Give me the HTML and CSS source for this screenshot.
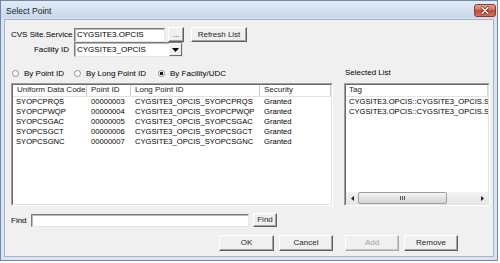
FILE: index.html
```html
<!DOCTYPE html>
<html>
<head>
<meta charset="utf-8">
<link rel="stylesheet" href="styles.css">
</head>
<body>
<div class="window">
  <div class="titlebar">
    <span class="title">Select Point</span>
    <div class="close">
      <svg width="22" height="13" viewBox="0 0 22 13">
        <defs>
          <linearGradient id="cg" x1="0" y1="0" x2="0" y2="1">
            <stop offset="0" stop-color="#e8a89a"/>
            <stop offset="0.45" stop-color="#d3705c"/>
            <stop offset="0.5" stop-color="#c34a33"/>
            <stop offset="1" stop-color="#d4775f"/>
          </linearGradient>
        </defs>
        <rect x="0.5" y="0.5" width="21" height="12" rx="2.5" fill="url(#cg)" stroke="#8a3a2c"/>
        <path d="M8 3.5 L14 9.5 M14 3.5 L8 9.5" stroke="#5a2218" stroke-width="2.6" stroke-linecap="round"/>
        <path d="M8 3.5 L14 9.5 M14 3.5 L8 9.5" stroke="#ffffff" stroke-width="1.5" stroke-linecap="round"/>
      </svg>
    </div>
  </div>
  <div class="client">
    <div class="form-row row1">
      <span class="lbl">CVS Site.Service</span>
      <div class="edit site">CYGSITE3.OPCIS</div>
      <button class="btn dots">...</button>
      <button class="btn refresh">Refresh List</button>
    </div>
    <div class="form-row row2">
      <span class="lbl">Facility ID</span>
      <div class="combo">
        <span class="combo-text">CYGSITE3_OPCIS</span>
        <span class="combo-btn">
          <svg width="7" height="4" viewBox="0 0 7 4"><path d="M0 0 H7 L3.5 4 Z" fill="#000"/></svg>
        </span>
      </div>
    </div>
    <div class="lists">
      <div class="radios">
        <label class="opt"><span class="radio"></span>By Point ID</label>
        <label class="opt"><span class="radio"></span>By Long Point ID</label>
        <label class="opt"><span class="radio checked"></span>By Facility/UDC</label>
      </div>
      <div class="sel-label">Selected List</div>
      <div class="listview">
        <div class="lv-inner">
          <div class="lv-head cols4">
            <div class="hc">Uniform Data Code</div>
            <div class="hc">Point ID</div>
            <div class="hc">Long Point ID</div>
            <div class="hc">Security</div>
          </div>
          <div class="lv-body">
            <div class="lv-row cols4"><div class="c">SYOPCPRQS</div><div class="c">00000003</div><div class="c">CYGSITE3_OPCIS_SYOPCPRQS</div><div class="c">Granted</div></div>
            <div class="lv-row cols4"><div class="c">SYOPCPWQP</div><div class="c">00000004</div><div class="c">CYGSITE3_OPCIS_SYOPCPWQP</div><div class="c">Granted</div></div>
            <div class="lv-row cols4"><div class="c">SYOPCSGAC</div><div class="c">00000005</div><div class="c">CYGSITE3_OPCIS_SYOPCSGAC</div><div class="c">Granted</div></div>
            <div class="lv-row cols4"><div class="c">SYOPCSGCT</div><div class="c">00000006</div><div class="c">CYGSITE3_OPCIS_SYOPCSGCT</div><div class="c">Granted</div></div>
            <div class="lv-row cols4"><div class="c">SYOPCSGNC</div><div class="c">00000007</div><div class="c">CYGSITE3_OPCIS_SYOPCSGNC</div><div class="c">Granted</div></div>
          </div>
        </div>
      </div>
      <div class="listview">
        <div class="lv-inner">
          <div class="lv-head cols1">
            <div class="hc tag">Tag</div>
          </div>
          <div class="lv-body">
            <div class="lv-row cols1"><div class="c sel">CYGSITE3.OPCIS::CYGSITE3_OPCIS.SYOPCPRQS</div></div>
            <div class="lv-row cols1"><div class="c sel">CYGSITE3.OPCIS::CYGSITE3_OPCIS.SYOPCPWQP</div></div>
          </div>
          <div class="hscroll">
            <div class="sb-arrow">
              <svg width="3" height="5" viewBox="0 0 3 5"><path d="M3 0 V5 L0 2.5 Z" fill="#222"/></svg>
            </div>
            <div class="sb-thumb">
              <svg width="5" height="4" viewBox="0 0 5 4"><path d="M0.5 0 V4 M2.5 0 V4 M4.5 0 V4" stroke="#555" stroke-width="1"/></svg>
            </div>
            <div class="sb-track"></div>
            <div class="sb-arrow">
              <svg width="3" height="5" viewBox="0 0 3 5"><path d="M0 0 V5 L3 2.5 Z" fill="#222"/></svg>
            </div>
          </div>
        </div>
      </div>
    </div>
    <div class="find-row">
      <span class="find-lbl">Find</span>
      <div class="edit find-edit"></div>
      <button class="btn find-btn">Find</button>
    </div>
    <div class="btn-row">
      <button class="btn act ok">OK</button>
      <button class="btn act">Cancel</button>
      <button class="btn act add" disabled>Add</button>
      <button class="btn act">Remove</button>
    </div>
  </div>
</div>
</body>
</html>
```

FILE: styles.css
```css
html, body {
  margin: 0;
  padding: 0;
  background: #ffffff;
}

body {
  font-family: "Liberation Sans", Arial, sans-serif;
  font-size: 8px;
  color: #000;
}

.window {
  width: 498px;
  height: 261px;
  box-sizing: border-box;
  border: 1px solid #7189a8;
  background: #d9e4f1;
  display: flex;
  flex-direction: column;
}

.titlebar {
  height: 17px;
  flex: none;
  display: flex;
  align-items: flex-start;
  background: linear-gradient(#e2ebf7, #c8d8ed);
}

.title {
  font-size: 8.5px;
  line-height: 10px;
  margin: 5px 0 0 5px;
  color: #1b1b1b;
}

.close {
  margin: 3px 1px 0 auto;
  width: 22px;
  height: 13px;
}

.close svg {
  display: block;
}

.client {
  flex: 1;
  margin: 1px 3px 3px 3px;
  border: 1px solid #a6b4c6;
  background: #f0f0f0;
  padding: 7px 2px 0 6px;
  display: flex;
  flex-direction: column;
}

.form-row {
  display: flex;
  align-items: center;
}

.row1 {
  height: 15px;
}

.row2 {
  height: 15px;
}

.lbl {
  width: 58px;
  margin-right: 5px;
  text-align: right;
  white-space: nowrap;
}

.edit {
  box-sizing: border-box;
  background: #fff;
  border: 1px solid;
  border-color: #7a7a7a #e6e6e6 #e6e6e6 #7a7a7a;
  box-shadow: inset 1px 1px 0 #b9b9b9;
  line-height: 12px;
  padding-left: 2px;
  white-space: nowrap;
  overflow: hidden;
}

.site {
  width: 91px;
  height: 14px;
}

.btn {
  box-sizing: border-box;
  font-family: "Liberation Sans", Arial, sans-serif;
  font-size: 8px;
  font-weight: 400;
  color: #262626;
  -webkit-font-smoothing: antialiased;
  background: #f0f0f0;
  border: 1px solid;
  border-color: #ffffff #5f5f5f #5f5f5f #ffffff;
  box-shadow: inset -1px -1px 0 #a3a3a3;
  padding: 0;
  margin: 0;
  line-height: 10px;
  text-align: center;
  white-space: nowrap;
}

.dots {
  width: 16px;
  height: 15px;
  margin-left: 3px;
  line-height: 8px;
}

.refresh {
  width: 56px;
  height: 15px;
  margin-left: 7px;
}

.combo {
  width: 109px;
  height: 15px;
  box-sizing: border-box;
  background: #fff;
  border: 1px solid;
  border-color: #7a7a7a #e6e6e6 #e6e6e6 #7a7a7a;
  box-shadow: inset 1px 1px 0 #b9b9b9;
  display: flex;
  align-items: stretch;
}

.combo-text {
  flex: 1;
  padding-left: 2px;
  line-height: 13px;
  white-space: nowrap;
}

.combo-btn {
  width: 13px;
  box-sizing: border-box;
  background: #f0f0f0;
  border: 1px solid;
  border-color: #f8f8f8 #6a6a6a #6a6a6a #f8f8f8;
  display: flex;
  align-items: center;
  justify-content: center;
}

.combo-btn svg {
  display: block;
}

.lists {
  margin-top: 10px;
  display: grid;
  grid-template-columns: 322px 146px;
  grid-template-rows: 12px 123px;
  column-gap: 11px;
  row-gap: 4px;
}

.radios {
  display: grid;
  grid-template-columns: 62px 84px auto;
  align-items: center;
  padding-left: 1px;
}

.opt {
  display: flex;
  align-items: center;
  white-space: nowrap;
}

.radio {
  width: 7px;
  height: 7px;
  box-sizing: border-box;
  border-radius: 50%;
  border: 1px solid #8d8d8d;
  background: #ffffff;
  margin-right: 5px;
  flex: none;
}

.radio.checked {
  background: radial-gradient(circle, #1a1a1a 0 1.6px, #ffffff 2px);
}

.sel-label {
  padding-left: 1px;
  line-height: 12px;
  white-space: nowrap;
}

.listview {
  box-sizing: border-box;
  border: 1px solid;
  border-color: #a0a0a0 #ffffff #ffffff #a0a0a0;
}

.lv-inner {
  box-sizing: border-box;
  height: 100%;
  border: 1px solid;
  border-color: #696969 #e3e3e3 #e3e3e3 #696969;
  background: #ffffff;
  display: flex;
  flex-direction: column;
  overflow: hidden;
}

.lv-head {
  height: 12px;
  box-sizing: border-box;
  border-bottom: 1px solid #e2e2e2;
  display: grid;
  flex: none;
}

.cols4 {
  grid-template-columns: 74px 44px 129px 71px;
}

.cols1 {
  grid-template-columns: 142px;
}

.hc {
  box-sizing: border-box;
  padding-left: 4px;
  border-right: 1px solid #cdcdcd;
  line-height: 10px;
  white-space: nowrap;
  overflow: hidden;
  color: #1a1a1a;
}

.hc.tag {
  padding-left: 3px;
  border-right-color: #d8d8d8;
}

.lv-body {
  flex: 1;
}

.lv-row {
  display: grid;
  height: 10px;
}

.c {
  padding-left: 4px;
  padding-right: 3px;
  font-size: 7.6px;
  line-height: 10px;
  white-space: nowrap;
  overflow: hidden;
}

.lv-row .c:first-child {
  padding-left: 3px;
}

.c.sel {
  padding-left: 1px;
  padding-right: 0;
}

.hscroll {
  height: 12px;
  flex: none;
  display: flex;
  background: linear-gradient(#f2f2f2, #e6e6e6);
}

.sb-arrow {
  width: 12px;
  display: flex;
  align-items: center;
  justify-content: center;
}

.sb-arrow svg,
.sb-thumb svg {
  display: block;
}

.sb-thumb {
  width: 89px;
  box-sizing: border-box;
  border: 1px solid #9c9c9c;
  border-radius: 2px;
  background: linear-gradient(#f7f7f7, #e3e3e3 50%, #d4d4d4);
  display: flex;
  align-items: center;
  justify-content: center;
}

.sb-track {
  flex: 1;
}

.find-row {
  margin-top: 7px;
  height: 14px;
  display: flex;
  align-items: center;
}

.find-lbl {
  width: 16px;
  margin-right: 4px;
}

.find-edit {
  width: 218px;
  height: 13px;
}

.find-btn {
  width: 24px;
  height: 14px;
  margin-left: 4px;
}

.btn-row {
  margin-top: 8px;
  display: flex;
  justify-content: flex-end;
  padding-right: 33px;
}

.act {
  width: 54px;
  height: 16px;
  margin-left: 5px;
}

.ok {
  width: 55px;
}

.add {
  margin-left: 12px;
  color: #a2a2a2;
  border-color: #ffffff #a8a8a8 #a8a8a8 #ffffff;
  box-shadow: inset -1px -1px 0 #c6c6c6;
}
```
